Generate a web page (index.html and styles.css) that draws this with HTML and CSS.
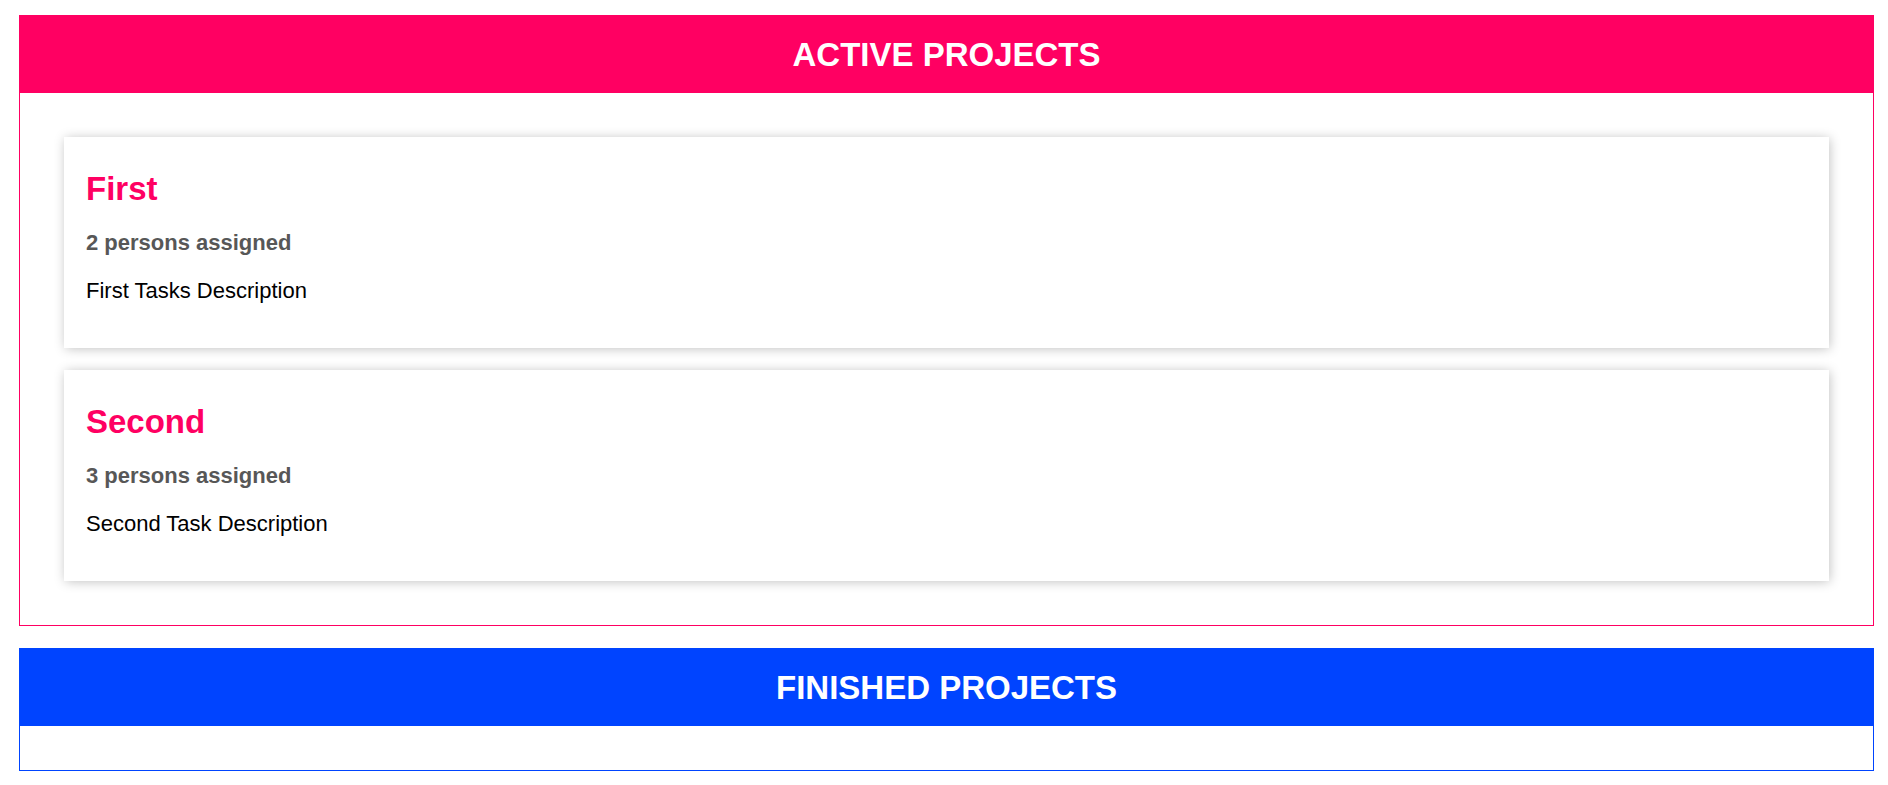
FILE: index.html
```html
<!DOCTYPE html>
<html lang="en">
<head>
<meta charset="UTF-8">
<title>Project Manager</title>
<link rel="stylesheet" href="styles.css">
</head>
<body>
<div id="app">
  <section class="projects" id="active-projects">
    <header><h2>ACTIVE PROJECTS</h2></header>
    <ul>
      <li>
        <h2>First</h2>
        <h3>2 persons assigned</h3>
        <p>First Tasks Description</p>
      </li>
      <li>
        <h2>Second</h2>
        <h3>3 persons assigned</h3>
        <p>Second Task Description</p>
      </li>
    </ul>
  </section>
  <section class="projects finished" id="finished-projects">
    <header><h2>FINISHED PROJECTS</h2></header>
    <ul></ul>
  </section>
</div>
</body>
</html>
```

FILE: styles.css
```css
* {
  box-sizing: border-box;
}

html {
  font-family: "Liberation Sans", Arial, sans-serif;
  font-size: 22px;
}

body {
  margin: 0;
  background: #ffffff;
}

#app {
  padding: 15px 14px 0 19px;
}

.projects {
  margin: 0 0 22px 0;
  border: 1px solid #ff0062;
}

.projects header {
  background: #ff0062;
  height: 77px;
  display: flex;
  justify-content: center;
  align-items: center;
}

.projects.finished {
  border-color: #0044ff;
}

.projects.finished header {
  background: #0044ff;
}

.projects header h2 {
  margin: 0;
  color: #ffffff;
  font-size: 33px;
  font-weight: bold;
}

.projects ul {
  list-style: none;
  margin: 0;
  padding: 22px;
}

.projects li {
  box-shadow: 1.375px 1.375px 11px rgba(0, 0, 0, 0.26);
  padding: 22px;
  margin: 22px;
  background: #ffffff;
}

.projects li h2 {
  color: #ff0062;
  margin: 11px 0;
  font-size: 33px;
}

.projects li h3 {
  color: #575757;
  font-size: 22px;
  margin: 22px 0;
}

.projects li p {
  margin: 22px 0;
  font-size: 22px;
  color: #000000;
}
```
